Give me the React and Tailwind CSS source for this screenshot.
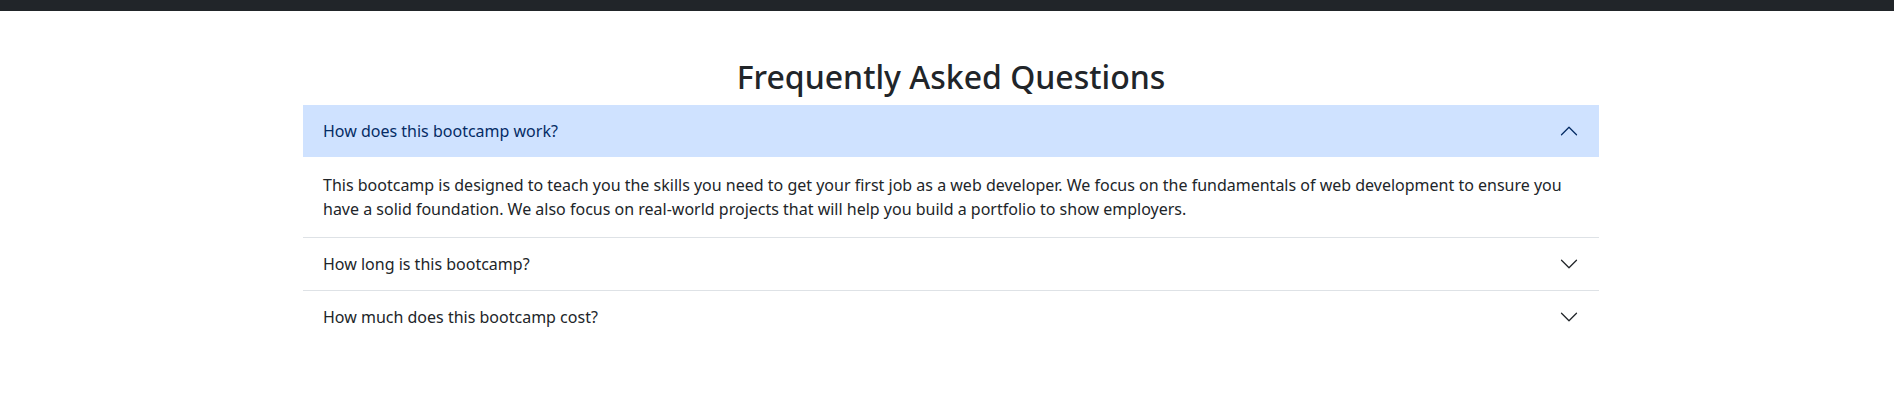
import React, { useState } from 'react';

const faqs = [
    {
        q: "How does this bootcamp work?",
        a: "This bootcamp is designed to teach you the skills you need to get your first job as a web developer. We focus on the fundamentals of web development to ensure you have a solid foundation. We also focus on real-world projects that will help you build a portfolio to show employers.",
    },
    {
        q: "How long is this bootcamp?",
        a: "The bootcamp runs for 12 weeks, with new cohorts starting every month.",
    },
    {
        q: "How much does this bootcamp cost?",
        a: "Tuition is paid up front or in monthly installments.",
    },
];

const Chevron = ({ open }) => (
    <svg
        viewBox="0 0 16 16"
        fill="none"
        stroke={open ? "#052c65" : "#212529"}
        strokeLinecap="round"
        strokeLinejoin="round"
        className={open ? "w-5 h-5 shrink-0 rotate-180" : "w-5 h-5 shrink-0"}
    >
        <path d="M2 5L8 11L14 5" />
    </svg>
);

const App = () => {
    const [open, setOpen] = useState(0);

    return (
        <div className="min-h-[416px] bg-white text-[#212529] font-['Noto_Sans',sans-serif]">
            {/* Navbar strip */}
            <div className="h-[11px] bg-[#212529]"></div>

            <div className="pl-2">
                <div className="mx-auto w-[1296px]">
                    <h2 className="mt-[47px] mb-[9px] text-center text-[32px] leading-[1.2] font-medium">
                        Frequently Asked Questions
                    </h2>

                    {/* Accordion */}
                    <div>
                        {faqs.map((item, i) => (
                            <div key={i} className={i < faqs.length - 1 ? "border-b border-[#dee2e6]" : ""}>
                                <button
                                    type="button"
                                    onClick={() => setOpen(open === i ? -1 : i)}
                                    className={
                                        open === i
                                            ? "w-full h-[52px] px-5 flex items-center justify-between text-left text-base bg-[#cfe2ff] text-[#052c65]"
                                            : "w-full h-[52px] px-5 flex items-center justify-between text-left text-base bg-white text-[#212529]"
                                    }
                                >
                                    <span>{item.q}</span>
                                    <Chevron open={open === i} />
                                </button>
                                {open === i && (
                                    <div className="px-5 py-4 text-base leading-6">
                                        {item.a}
                                    </div>
                                )}
                            </div>
                        ))}
                    </div>
                </div>
            </div>
        </div>
    );
};

export default App;
